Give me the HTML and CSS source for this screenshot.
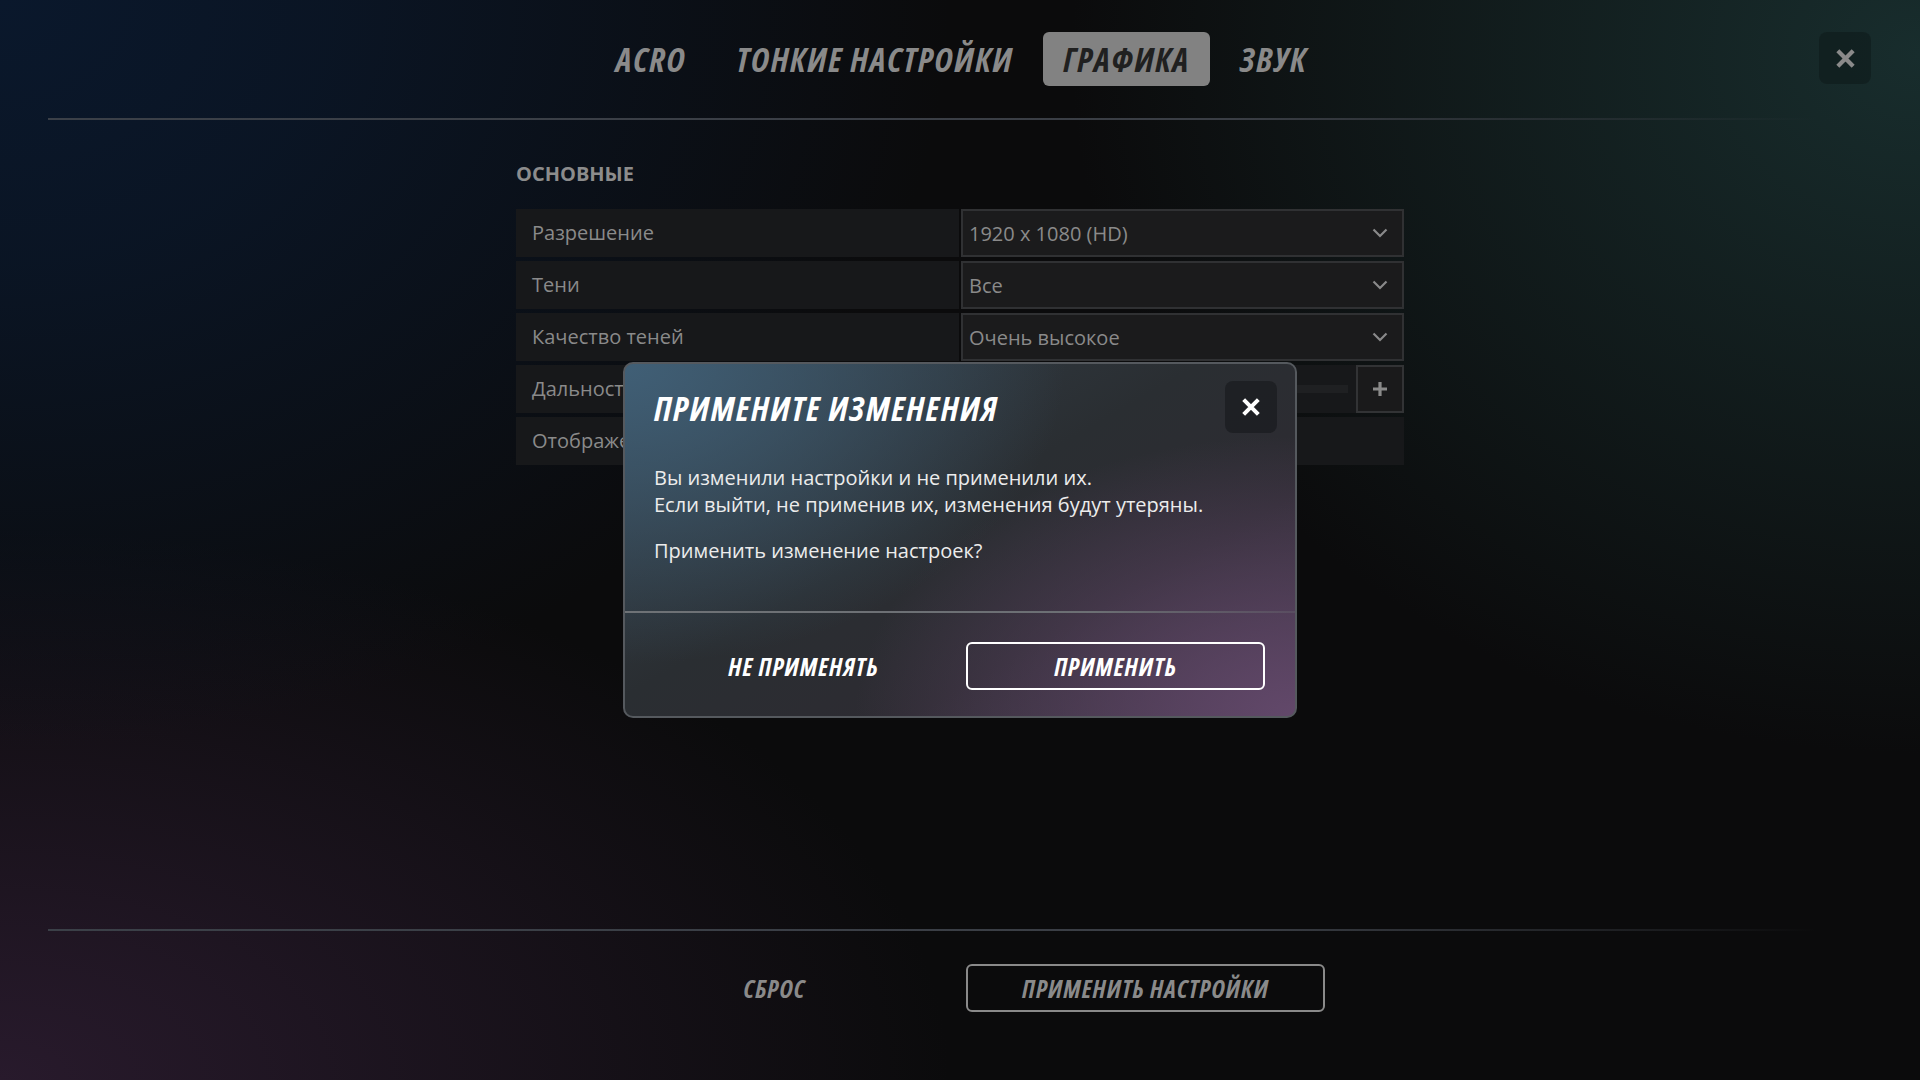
FILE: index.html
```html
<!DOCTYPE html>
<html lang="ru">
<head>
<meta charset="utf-8">
<title>Настройки — Графика</title>
<link rel="stylesheet" href="styles.css">
</head>
<body>
<div class="screen">
  <header class="header">
    <div class="header-spacer"></div>
    <nav class="tabs">
      <span class="tab">ACRO</span>
      <span class="tab">ТОНКИЕ НАСТРОЙКИ</span>
      <span class="tab tab-active">ГРАФИКА</span>
      <span class="tab">ЗВУК</span>
    </nav>
    <div class="header-right">
      <button class="icon-btn top-close" aria-label="Закрыть">
        <svg viewBox="0 0 24 24" width="23" height="23"><path d="M4 4 L20 20 M20 4 L4 20" stroke="#8a8a8a" stroke-width="4.4" stroke-linecap="butt"/></svg>
      </button>
    </div>
  </header>
  <div class="rule"></div>

  <main class="content">
    <section class="group">
      <h2 class="group-title">ОСНОВНЫЕ</h2>
      <div class="rows">
        <div class="row">
          <div class="label">Разрешение</div>
          <div class="select"><span>1920 x 1080 (HD)</span><svg class="chev" viewBox="0 0 16 10" width="16" height="10"><path d="M1.5 1.5 L8 8 L14.5 1.5" fill="none" stroke="#8a8a8a" stroke-width="2.2"/></svg></div>
        </div>
        <div class="row">
          <div class="label">Тени</div>
          <div class="select"><span>Все</span><svg class="chev" viewBox="0 0 16 10" width="16" height="10"><path d="M1.5 1.5 L8 8 L14.5 1.5" fill="none" stroke="#8a8a8a" stroke-width="2.2"/></svg></div>
        </div>
        <div class="row">
          <div class="label">Качество теней</div>
          <div class="select"><span>Очень высокое</span><svg class="chev" viewBox="0 0 16 10" width="16" height="10"><path d="M1.5 1.5 L8 8 L14.5 1.5" fill="none" stroke="#8a8a8a" stroke-width="2.2"/></svg></div>
        </div>
        <div class="row">
          <div class="label">Дальность прорисовки</div>
          <div class="slider-cell">
            <div class="track"></div>
            <button class="plus" aria-label="Увеличить">
              <svg viewBox="0 0 16 16" width="16" height="16"><path d="M8 1 V15 M1 8 H15" stroke="#8a8a8a" stroke-width="3.2"/></svg>
            </button>
          </div>
        </div>
        <div class="row">
          <div class="label">Отображение травы</div>
          <div class="plain-cell"></div>
        </div>
      </div>
    </section>
  </main>

  <div class="rule"></div>
  <footer class="footer">
    <button class="btn btn-ghost">СБРОС</button>
    <button class="btn btn-outline">ПРИМЕНИТЬ НАСТРОЙКИ</button>
  </footer>

  <div class="modal">
    <div class="modal-head">
      <h1 class="modal-title">ПРИМЕНИТЕ ИЗМЕНЕНИЯ</h1>
      <button class="icon-btn modal-close" aria-label="Закрыть">
        <svg viewBox="0 0 24 24" width="22" height="22"><path d="M4 4 L20 20 M20 4 L4 20" stroke="#ffffff" stroke-width="4.4"/></svg>
      </button>
    </div>
    <div class="modal-body">
      <p>Вы изменили настройки и не применили их.<br>Если выйти, не применив их, изменения будут утеряны.</p>
      <p>Применить изменение настроек?</p>
    </div>
    <div class="modal-sep"></div>
    <div class="modal-actions">
      <button class="btn btn-ghost btn-light">НЕ ПРИМЕНЯТЬ</button>
      <button class="btn btn-outline btn-light">ПРИМЕНИТЬ</button>
    </div>
  </div>
</div>
</body>
</html>
```

FILE: styles.css
```css
* { box-sizing: border-box; }
html, body { margin: 0; padding: 0; }
body {
  width: 1920px;
  height: 1080px;
  overflow: hidden;
  font-family: "Open Sans", "Noto Sans", sans-serif;
  background: #0b0b0c;
}
.screen {
  position: relative;
  width: 1920px;
  height: 1080px;
  display: flex;
  flex-direction: column;
  background:
    radial-gradient(ellipse 950px 750px at 0% 0%, rgba(10, 24, 44, 1) 0%, rgba(10, 24, 44, 0.75) 35%, rgba(10, 24, 44, 0) 100%),
    radial-gradient(ellipse 850px 700px at 100% 5%, rgba(24, 45, 45, 1) 0%, rgba(24, 45, 45, 0.6) 40%, rgba(24, 45, 45, 0) 100%),
    radial-gradient(ellipse 950px 550px at 0% 100%, rgba(40, 26, 44, 1) 0%, rgba(40, 26, 44, 0.6) 40%, rgba(40, 26, 44, 0) 100%),
    #0b0b0c;
}
.header {
  display: grid;
  grid-template-columns: 1fr auto 1fr;
  align-items: start;
  padding: 32px 49px 0 48px;
  height: 118px;
}
.tabs {
  display: flex;
  align-items: center;
  gap: 10px;
  margin-left: 4px;
}
.tab {
  font-family: "Open Sans", sans-serif;
  font-weight: 700;
  font-style: italic;
  font-stretch: 75%;
  font-size: 34px;
  letter-spacing: 1.5px;
  color: #8a8a8a;
  height: 54px;
  line-height: 54px;
  padding: 0 20px;
  border-radius: 6px;
}
.tab-active {
  background: #828282;
  color: #202020;
}
.header-right {
  display: flex;
  justify-content: flex-end;
}
.icon-btn {
  border: none;
  padding: 0;
  display: flex;
  align-items: center;
  justify-content: center;
  cursor: pointer;
}
.top-close {
  width: 52px;
  height: 52px;
  border-radius: 8px;
  background: rgba(0, 0, 0, 0.22);
}
.rule {
  height: 2px;
  margin: 0 48px;
  background: linear-gradient(to right, #3b4048 0%, #3a3e45 65%, rgba(58, 62, 69, 0.35) 88%, rgba(58, 62, 69, 0) 97%);
}
.content {
  flex: 1;
  display: flex;
  justify-content: center;
}
.group {
  width: 888px;
  padding-top: 39px;
}
.group-title {
  margin: 0 0 20px 0;
  font-size: 20px;
  font-weight: 700;
  color: #8c8c8c;
  line-height: 30px;
  height: 30px;
}
.rows {
  display: flex;
  flex-direction: column;
  gap: 4px;
}
.row {
  display: grid;
  grid-template-columns: 443px 1fr;
  gap: 2px;
  height: 48px;
}
.label {
  background: #17181a;
  color: #8a8a8a;
  font-size: 20px;
  line-height: 48px;
  padding-left: 16px;
  white-space: nowrap;
  overflow: hidden;
}
.select {
  background: #1b1b1c;
  border: 2px solid #303133;
  display: flex;
  align-items: center;
  justify-content: space-between;
  padding: 0 14px 0 6px;
  color: #8a8a8a;
  font-size: 20px;
}
.slider-cell {
  background: #17181a;
  display: flex;
  align-items: center;
  justify-content: flex-end;
  gap: 8px;
}
.track {
  width: 60px;
  height: 8px;
  background: #1f2022;
}
.plus {
  width: 48px;
  height: 48px;
  background: #1a1a1b;
  border: 2px solid #323335;
  display: flex;
  align-items: center;
  justify-content: center;
  padding: 0;
}
.plain-cell {
  background: #17181a;
}
.footer {
  height: 149px;
  display: flex;
  justify-content: center;
  align-items: flex-start;
  gap: 12px;
  padding-top: 33px;
}
.btn {
  width: 359px;
  height: 48px;
  border-radius: 6px;
  font-family: "Open Sans", sans-serif;
  font-weight: 700;
  font-style: italic;
  font-stretch: 75%;
  font-size: 25px;
  letter-spacing: 1px;
  color: #8a8a8a;
  background: transparent;
  border: 2px solid transparent;
  cursor: pointer;
  padding: 0;
}
.btn-outline {
  border-color: #8a8a8a;
}
.modal {
  position: absolute;
  left: 623px;
  top: 362px;
  width: 674px;
  height: 356px;
  border: 2px solid #55595e;
  border-radius: 10px;
  background:
    radial-gradient(ellipse 440px 300px at 0% 0%, rgba(64, 95, 118, 1) 0%, rgba(64, 95, 118, 0) 100%),
    radial-gradient(ellipse 440px 280px at 100% 100%, rgba(98, 72, 106, 1) 0%, rgba(98, 72, 106, 0) 100%),
    linear-gradient(150deg, #34414b 0%, #2a2e32 45%, #2d2b32 70%, #3c3242 100%);
  display: flex;
  flex-direction: column;
}
.modal-head {
  display: flex;
  justify-content: space-between;
  align-items: flex-start;
  padding: 17px 18px 0 29px;
  height: 100px;
}
.modal-title {
  margin: 0;
  padding-top: 3px;
  font-family: "Open Sans", sans-serif;
  font-weight: 700;
  font-style: italic;
  font-stretch: 75%;
  font-size: 34px;
  letter-spacing: 1.6px;
  line-height: 48px;
  color: #ffffff;
}
.modal-close {
  width: 52px;
  height: 52px;
  border-radius: 8px;
  background: rgba(20, 22, 25, 0.55);
}
.modal-body {
  padding: 0 29px;
  color: #ececec;
  font-size: 20px;
  line-height: 27px;
  height: 147px;
}
.modal-body p {
  margin: 0 0 19px 0;
}
.modal-sep {
  height: 2px;
  background: linear-gradient(to right, #6e7276 0%, #6c6f74 70%, rgba(108, 111, 116, 0.3) 100%);
}
.modal-actions {
  display: flex;
  gap: 13px;
  padding: 29px 30px 0 29px;
}
.btn-light {
  width: 299px;
  color: #ffffff;
}
.btn-light.btn-outline {
  border-color: #ffffff;
}
```
